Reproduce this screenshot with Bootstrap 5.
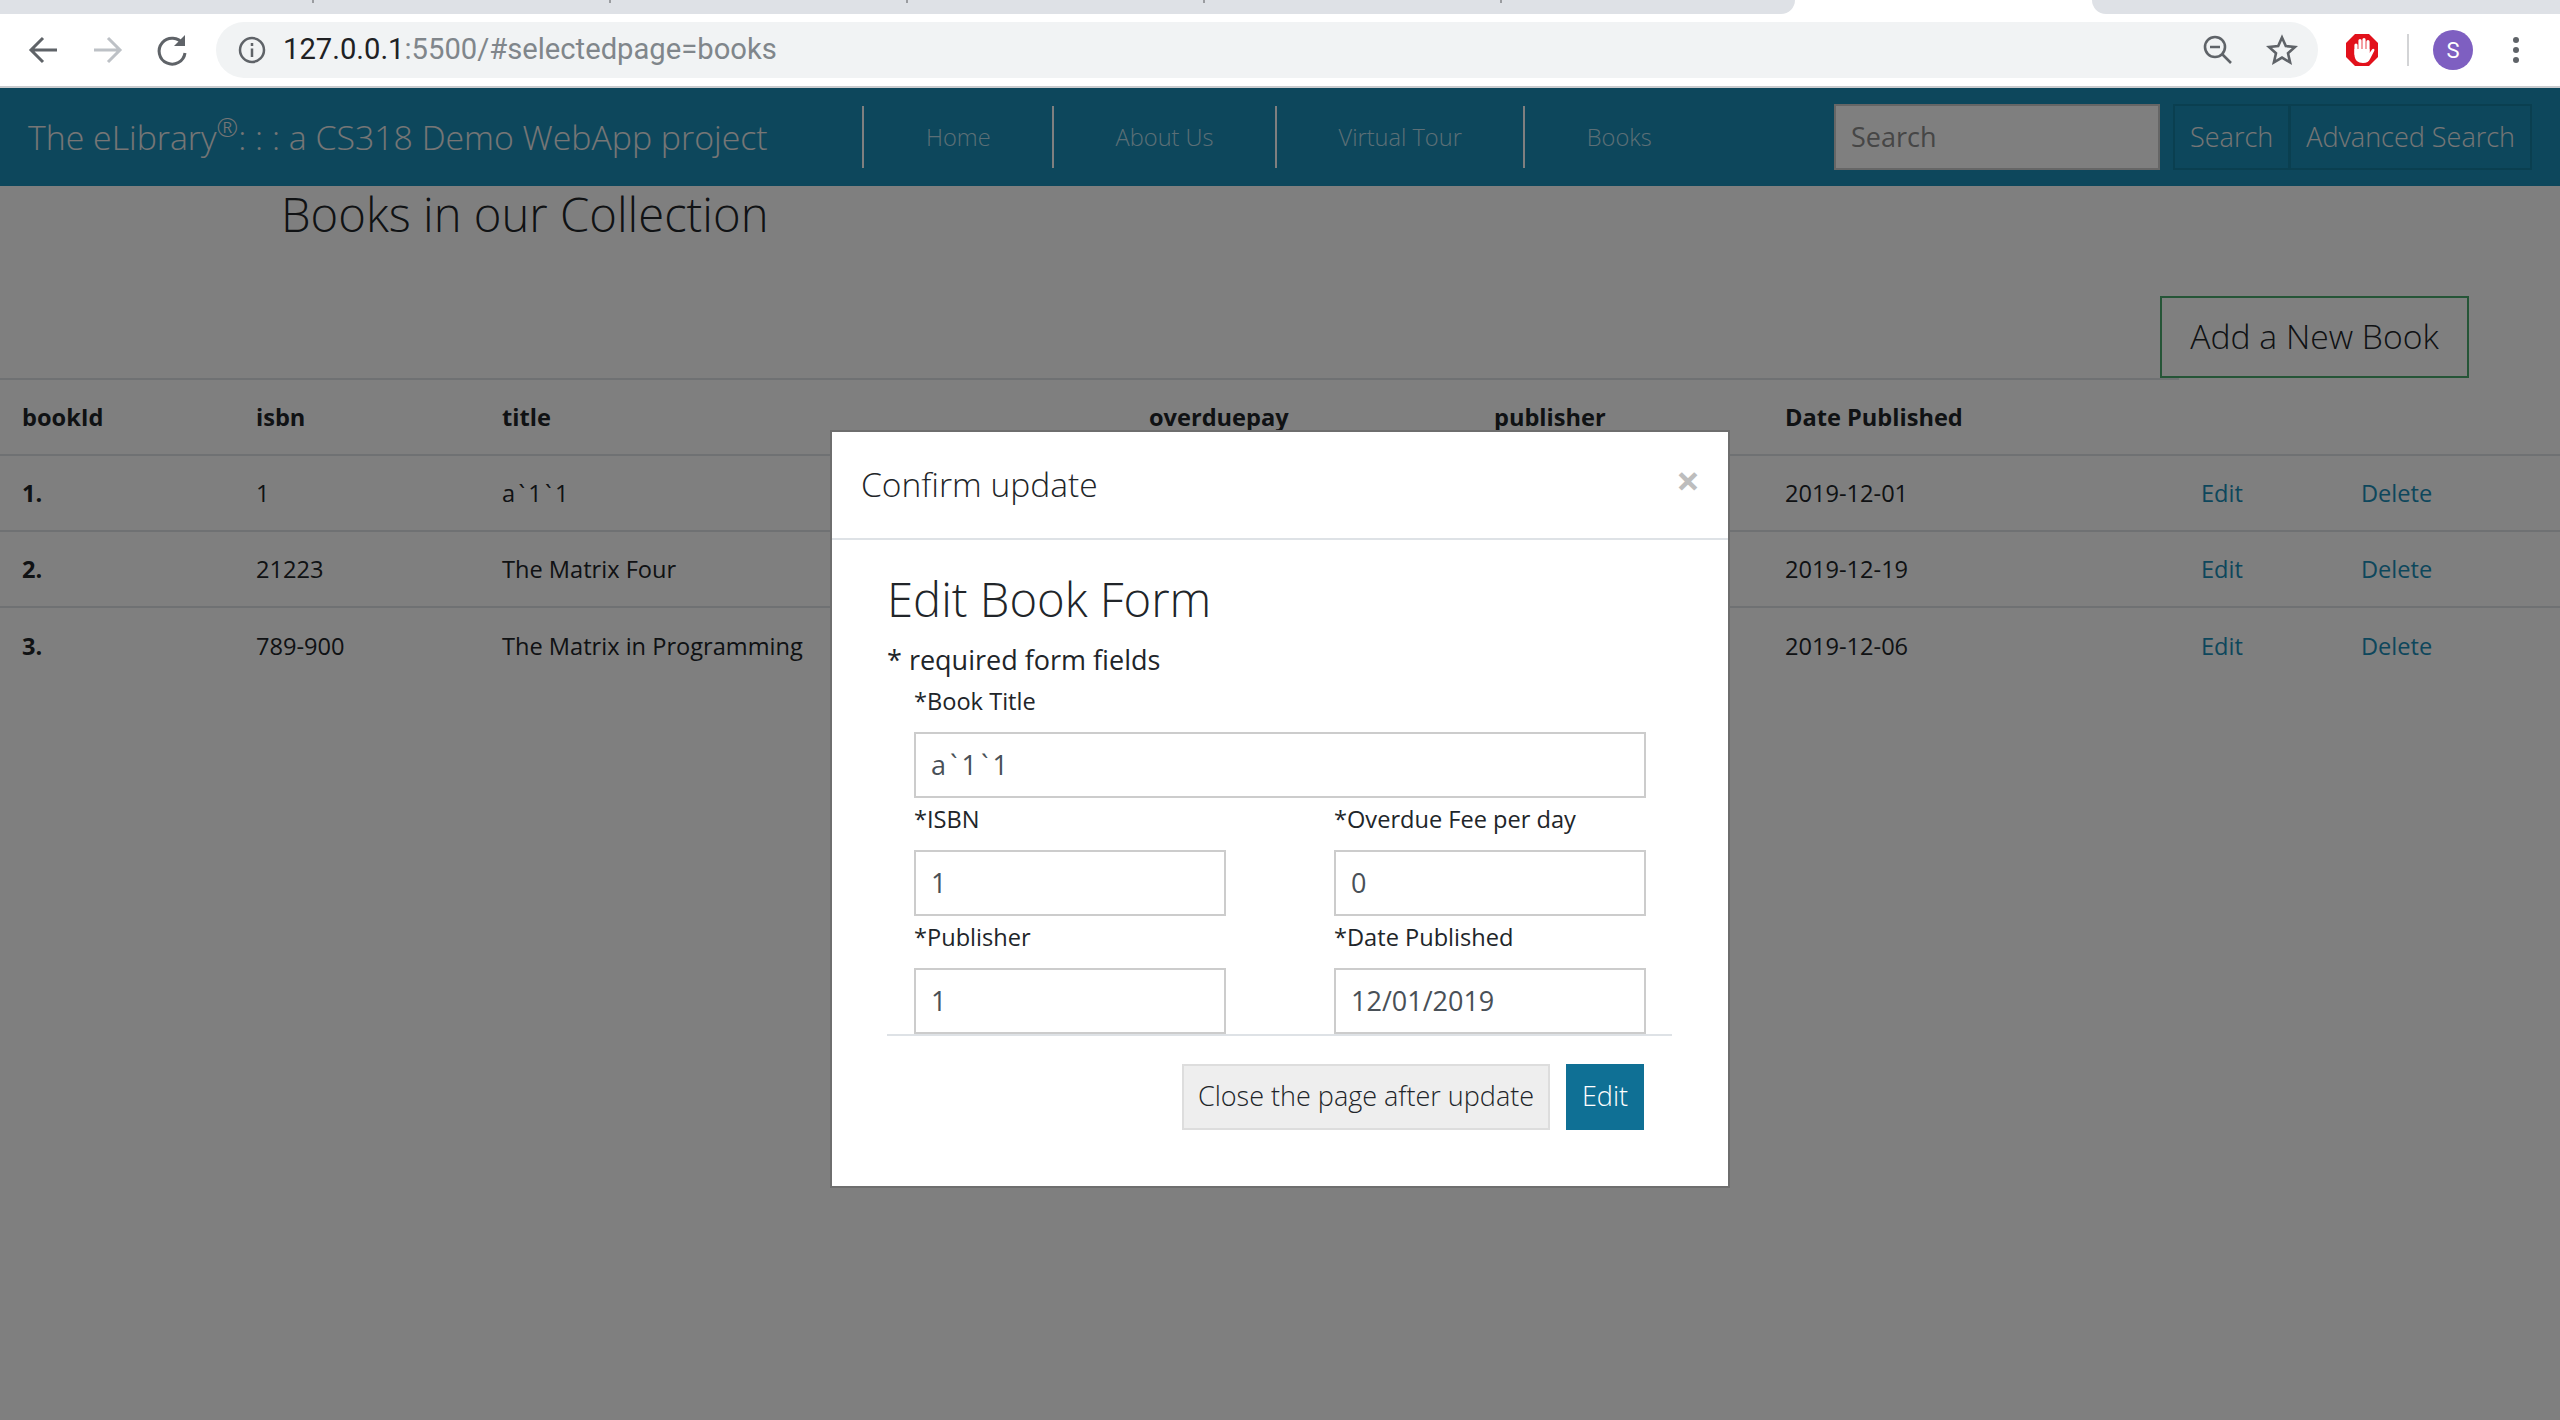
<!DOCTYPE html>
<html lang="en">
<head>
  <meta charset="UTF-8" />
  <title>The eLibrary - Books</title>
  <link href="https://cdn.jsdelivr.net/npm/bootstrap@5.3.3/dist/css/bootstrap.min.css" rel="stylesheet" />
  <style>
    html, body { height: 100%; }
    body { margin: 0; background: #fff; color: #212529; font-family: "Open Sans", "Noto Sans", sans-serif; font-size: 23.6px; overflow: hidden; }

    /* browser chrome */
    .tab-strip { height: 14px; background: #fff; }
    .tab-left { width: 1795px; background: #dee1e6; border-bottom-right-radius: 14px; padding-left: 17px; }
    .tab-stub { width: 297px; height: 14px; background: linear-gradient(#9a9ca0, #9a9ca0) right top / 2px 3px no-repeat; }
    .tab-gap { width: 297px; }
    .tab-right { background: #dee1e6; border-bottom-left-radius: 14px; }
    .tool-bar { height: 74px; background: #fff; border-bottom: 2px solid #c9cbce; padding-left: 24px; padding-right: 26px; }
    .tool-btn { width: 40px; height: 40px; flex: none; }
    .url-bar { width: 2102px; height: 56px; background: #f1f3f4; border-radius: 28px; margin-left: 24px; padding: 0 20px 0 22px; font-family: Roboto, sans-serif; font-size: 29.2px; color: #80868b; }
    .url-host { color: #202124; }
    .url-text { margin-left: 17px; }
    .star-ico { margin-left: 32px; }
    .stop-ico { margin-left: 27px; }
    .bar-divider { width: 2px; height: 32px; background: #d3d4d6; margin: 0 24px 0 28px; }
    .avatar-dot { width: 40px; height: 40px; border-radius: 50%; background: #7e5fc1; color: #fff; font-size: 22px; font-family: Roboto, sans-serif; }
    .dots-ico { margin-left: 38px; }

    /* page */
    .app-page { position: relative; height: 1332px; background: #fff; }
    .lib-nav { height: 98px; background: #1a8eb8; padding: 0 28px; color: #ececec; }
    .lib-brand { font-size: 33.85px; font-weight: 300; width: 834px; color: #ececec; text-decoration: none; }
    .lib-brand sup { font-size: 26px; top: -.5em; line-height: 0; }
    .lib-link { height: 62px; padding: 2px 61px 0 62px; border-right: 2px solid #fff; font-size: 23.6px; font-weight: 300; color: #b8dfec; text-decoration: none; }
    .lib-link.first { border-left: 2px solid #fff; }
    .lib-link.last { border-right: 0; }
    .lib-search { width: 326px; height: 66px; background: #fff; border: 2px solid #ccc; border-radius: 0; font-size: 27px; padding: 0 15px 2px; margin-left: auto; }
    .lib-search::placeholder { color: #8c8c8c; }
    .lib-btn { height: 66px; border: 2px solid #147ea0; background: transparent; color: #ececec; font-size: 27px; font-weight: 300; padding: 0 15px; border-radius: 0; }
    .lib-btn.search-go { margin-left: 13px; }
    .lib-btn + .lib-btn { margin-left: -1px; }
    .page-title { font-size: 47.2px; font-weight: 300; margin: 0; padding-left: 281px; line-height: 56px; }
    .add-row { height: 80px; margin-top: 54px; padding-right: 91px; }
    .add-btn { height: 82px; width: 309px; border: 2px solid #4aab6f; border-radius: 0; background: transparent; color: #212529; font-size: 33.7px; font-weight: 300; padding: 0 0 2px; }

    .book-table { table-layout: fixed; width: 2560px; margin: 2px 0 0; font-size: 23.6px; color: #212529; }
    .book-table th, .book-table td { height: 76px; padding: 0 0 0 22px; vertical-align: middle; border-top: 2px solid #dee2e6; border-bottom: 0; line-height: 36px; white-space: nowrap; background: transparent; }
    .book-table th.no-line { border-top: 0; }
    .book-table a { color: #1a8eb8; text-decoration: none; }
    .tick-val { letter-spacing: 3.3px; }
    .c-id { width: 234px; } .c-isbn { width: 246px; } .c-title { width: 647px; } .c-due { width: 345px; }
    .c-pub { width: 291px; } .c-date { width: 416px; } .c-edit { width: 160px; }

    /* dimming + dialog */
    .dim-layer { position: absolute; inset: 0; background: rgba(0,0,0,.5); }
    .dialog-box.modal-content { position: absolute; top: 342px; left: 830px; width: 900px; height: 758px; background: #fff; border: 2px solid #6e6e6e; border-radius: 0; }
    .dialog-box .modal-header { height: 108px; padding: 0 28px 0 29px; border-bottom: 2px solid #dee2e6; border-radius: 0; }
    .dialog-box .modal-title { font-size: 33.6px; font-weight: 300; line-height: 1; }
    .dialog-close { border: 0; background: none; padding: 0; font-size: 42px; font-weight: 700; color: #bdbdbd; line-height: 1; margin-top: -10px; }
    .dialog-body { padding: 30px 56px 0 55px; }
    .form-head { font-size: 47.2px; font-weight: 300; line-height: 58px; margin: 0 0 11px; }
    .form-note { font-size: 27px; line-height: 42px; margin: 0 0 2px; }
    .form-fields { padding: 0 26px 0 27px; }
    .field-half { width: 312px; }
    .field-label { display: block; font-size: 23.6px; line-height: 36px; margin: 0 0 13px; }
    .field-input.form-control { height: 66px; border: 2px solid #ccc; border-radius: 0; font-size: 27px; color: #495057; padding: 0 15px 2px; margin-bottom: 3px; font-family: inherit; }
    .field-input.tick-val { letter-spacing: 4px; }
    .last-row .field-input.form-control { margin-bottom: 0; }
    .form-rule { border-top: 2px solid #dee2e6; margin: 0; opacity: 1; }
    .form-actions { padding: 28px 0 0; margin-right: 28px; gap: 16px; }
    .act-close { height: 66px; width: 368px; background: #eee; border: 2px solid #ddd; border-radius: 0; font-size: 27px; font-weight: 300; padding: 0 0 2px; color: #212529; }
    .act-edit { height: 66px; width: 78px; background: #0f7095; border: 0; border-radius: 0; font-size: 27px; font-weight: 300; padding: 0 0 2px; color: #fff; }
  </style>
</head>
<body>

  <div class="tab-strip d-flex">
    <div class="tab-left d-flex">
      <div class="tab-stub"></div><div class="tab-stub"></div><div class="tab-stub"></div><div class="tab-stub"></div><div class="tab-stub"></div>
    </div>
    <div class="tab-gap"></div>
    <div class="tab-right flex-grow-1"></div>
  </div>

  <div class="tool-bar d-flex align-items-center">
    <svg class="tool-btn" viewBox="0 0 40 40" fill="none" stroke="#5f6368" stroke-width="3"><path d="M33 20H8M19 8 7 20l12 12"/></svg>
    <svg class="tool-btn ms-4" viewBox="0 0 40 40" fill="none" stroke="#bdc1c6" stroke-width="3"><path d="M6 20h25M20 8l12 12-12 12"/></svg>
    <svg class="tool-btn ms-4" viewBox="0 0 40 40" fill="none" stroke="#5f6368" stroke-width="3"><path d="M31 14a13 13 0 1 0 2 9"/><path d="M33 5v11H22z" fill="#5f6368" stroke="none"/></svg>
    <div class="url-bar d-flex align-items-center">
      <svg width="28" height="28" viewBox="0 0 28 28" fill="none" stroke="#5f6368" stroke-width="2.5"><circle cx="14" cy="14" r="12"/><path d="M14 12.500V21M14 7v3"/></svg>
      <span class="url-text"><span class="url-host">127.0.0.1</span>:5500/#selectedpage=books</span>
      <svg class="ms-auto" width="32" height="32" viewBox="0 0 32 32" fill="none" stroke="#5f6368" stroke-width="2.6"><circle cx="13" cy="13" r="10"/><path d="M8 13h10M20 20l9 9"/></svg>
      <svg class="star-ico" width="32" height="32" viewBox="0 0 32 32" fill="none" stroke="#5f6368" stroke-width="2.6"><path d="M16 3.500l3.800 8.600 9.200.9-7 6.200 2.100 9.200-8.100-4.800-8.100 4.800 2.100-9.200-7-6.200 9.200-.9z"/></svg>
    </div>
    <svg class="stop-ico" width="34" height="34" viewBox="0 0 34 34">
      <path d="M10 1h14l9 9v14l-9 9H10l-9-9V10z" fill="#e2111b"/>
      <path d="M11 12v9M15 7.500V18M19 6.500V18M23 8.500V19" stroke="#fff" stroke-width="3.200" stroke-linecap="round"/>
      <path d="M9.500 16h15v4l2.500-3.500c1.200-1.400 3-.3 2.300 1.200L25 26c-1.200 2.500-3 4-7 4-5 0-8.500-3-8.500-8z" fill="#fff"/>
    </svg>
    <div class="bar-divider"></div>
    <div class="avatar-dot d-flex align-items-center justify-content-center">S</div>
    <svg class="dots-ico" width="10" height="34" viewBox="0 0 10 34" fill="#5f6368"><circle cx="5" cy="7" r="3"/><circle cx="5" cy="17" r="3"/><circle cx="5" cy="27" r="3"/></svg>
  </div>

  <div class="app-page">
    <nav class="lib-nav d-flex align-items-center">
      <a class="lib-brand" href="#">The eLibrary<sup>®</sup>: : : a CS318 Demo WebApp project</a>
      <a class="lib-link first d-flex align-items-center" href="#">Home</a>
      <a class="lib-link d-flex align-items-center" href="#">About Us</a>
      <a class="lib-link d-flex align-items-center" href="#">Virtual Tour</a>
      <a class="lib-link last d-flex align-items-center" href="#">Books</a>
      <input class="lib-search form-control" type="text" placeholder="Search" />
      <button class="lib-btn search-go btn" type="button">Search</button>
      <button class="lib-btn btn" type="button">Advanced Search</button>
    </nav>

    <h2 class="page-title">Books in our Collection</h2>
    <div class="add-row d-flex justify-content-end">
      <button class="add-btn btn" type="button">Add a New Book</button>
    </div>

    <table class="book-table table">
      <colgroup>
        <col class="c-id" /><col class="c-isbn" /><col class="c-title" /><col class="c-due" /><col class="c-pub" /><col class="c-date" /><col class="c-edit" /><col />
      </colgroup>
      <thead>
        <tr><th>bookId</th><th>isbn</th><th>title</th><th>overduepay</th><th>publisher</th><th>Date Published</th><th class="no-line"></th><th class="no-line"></th></tr>
      </thead>
      <tbody>
        <tr><th>1.</th><td>1</td><td class="tick-val">a`1`1</td><td></td><td></td><td>2019-12-01</td><td><a href="#">Edit</a></td><td><a href="#">Delete</a></td></tr>
        <tr><th>2.</th><td>21223</td><td>The Matrix Four</td><td></td><td></td><td>2019-12-19</td><td><a href="#">Edit</a></td><td><a href="#">Delete</a></td></tr>
        <tr><th>3.</th><td>789-900</td><td>The Matrix in Programming</td><td></td><td></td><td>2019-12-06</td><td><a href="#">Edit</a></td><td><a href="#">Delete</a></td></tr>
      </tbody>
    </table>

    <div class="dim-layer"></div>

    <div class="dialog-box modal-content">
      <div class="modal-header d-flex justify-content-between align-items-center">
        <h5 class="modal-title">Confirm update</h5>
        <button class="dialog-close" type="button">×</button>
      </div>
      <div class="dialog-body">
        <h3 class="form-head">Edit Book Form</h3>
        <p class="form-note">* required form fields</p>
        <form class="form-fields">
          <label class="field-label">*Book Title</label>
          <input class="field-input tick-val form-control" type="text" value="a`1`1" />
          <div class="d-flex justify-content-between">
            <div class="field-half">
              <label class="field-label">*ISBN</label>
              <input class="field-input form-control" type="text" value="1" />
            </div>
            <div class="field-half">
              <label class="field-label">*Overdue Fee per day</label>
              <input class="field-input form-control" type="text" value="0" />
            </div>
          </div>
          <div class="last-row d-flex justify-content-between">
            <div class="field-half">
              <label class="field-label">*Publisher</label>
              <input class="field-input form-control" type="text" value="1" />
            </div>
            <div class="field-half">
              <label class="field-label">*Date Published</label>
              <input class="field-input form-control" type="text" value="12/01/2019" />
            </div>
          </div>
        </form>
        <hr class="form-rule" />
        <div class="form-actions d-flex justify-content-end">
          <button class="act-close btn" type="button">Close the page after update</button>
          <button class="act-edit btn" type="button">Edit</button>
        </div>
      </div>
    </div>
  </div>

  <script src="https://cdn.jsdelivr.net/npm/bootstrap@5.3.3/dist/js/bootstrap.bundle.min.js"></script>
</body>
</html>
